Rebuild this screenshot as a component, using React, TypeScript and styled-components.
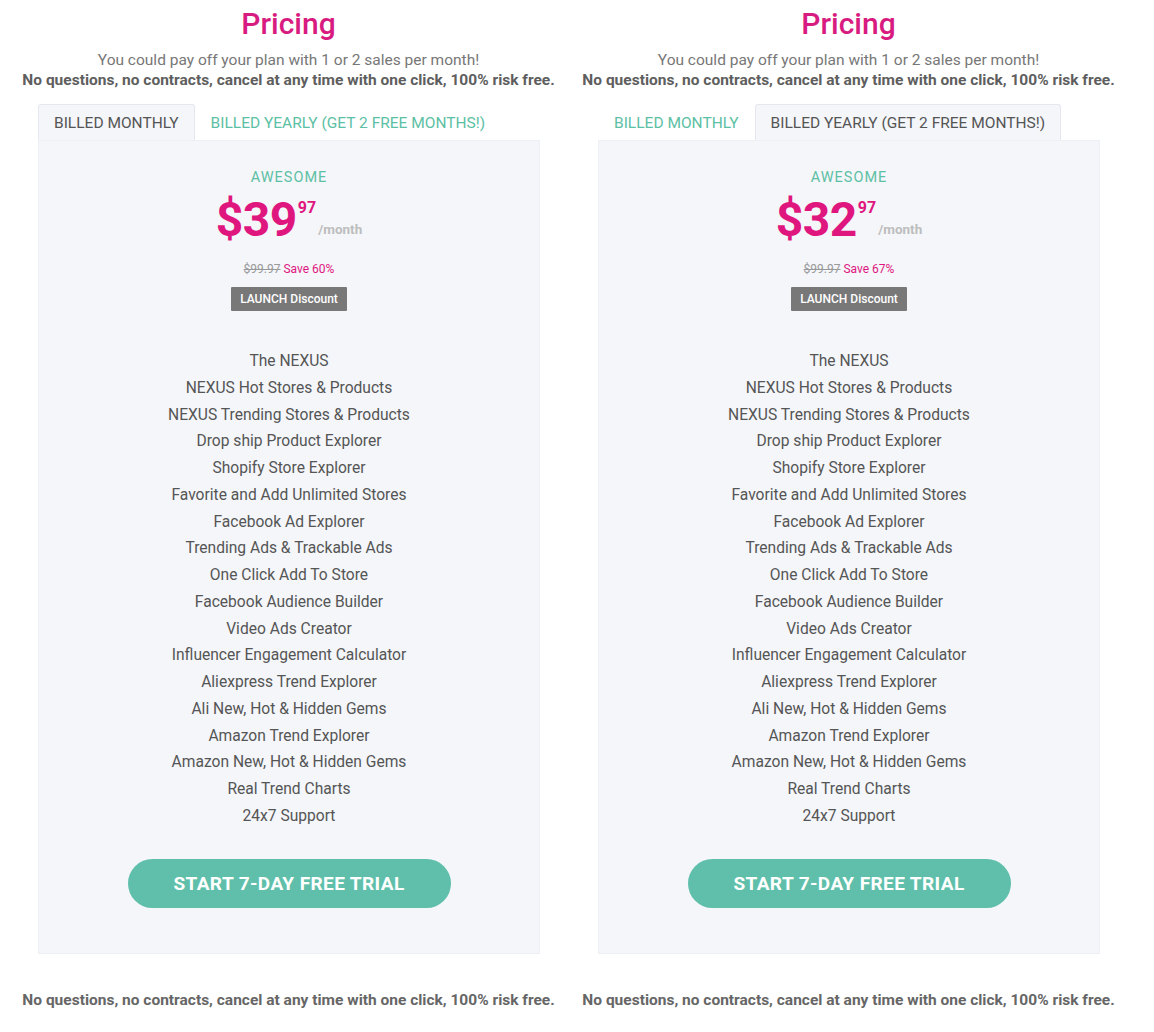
import React, { FC } from 'react';
import styled, { createGlobalStyle } from 'styled-components';

const GlobalStyle = createGlobalStyle`
    html, body {
        margin: 0;
        padding: 0;
        background: #ffffff;
    }
    body {
        font-family: Roboto, "Liberation Sans", Arial, sans-serif;
        -webkit-font-smoothing: antialiased;
    }
`;

const Page = styled.div`
    display: grid;
    grid-template-columns: 537px 537px;
    column-gap: 23px;
    padding: 6px 0 0 20px;
    width: 1154px;
    box-sizing: border-box;
`;

const Section = styled.section`
    display: flex;
    flex-direction: column;
    align-items: stretch;
`;

const Title = styled.h2`
    margin: 0;
    font-size: 30px;
    line-height: 36px;
    font-weight: 500;
    color: #d81b80;
    text-align: center;
`;

const Lead = styled.p`
    margin: 8px 0 0;
    font-size: 15.5px;
    line-height: 20px;
    color: #777;
    text-align: center;
`;

const Strong = styled.p`
    margin: 0;
    font-size: 15.5px;
    line-height: 20px;
    font-weight: 700;
    color: #5e5e5e;
    text-align: center;
    white-space: nowrap;
`;

const Tabs = styled.div`
    display: flex;
    margin: 14px 18px 0;
    height: 36px;
`;

const Tab = styled.button<{ active?: boolean }>`
    border: 1px solid ${p => (p.active ? '#e4e8ee' : 'transparent')};
    border-bottom: none;
    border-radius: 3px 3px 0 0;
    background: ${p => (p.active ? '#f4f6fa' : 'transparent')};
    color: ${p => (p.active ? '#555' : '#5cc0a4')};
    font-family: inherit;
    font-size: 15.5px;
    padding: 0 15px;
    height: 36px;
    text-transform: uppercase;
    cursor: pointer;
    margin-bottom: -1px;
    position: relative;
    z-index: 1;
`;

const Card = styled.div`
    margin: 0 17px 0 18px;
    background: #f4f6fa;
    border: 1px solid #eceff4;
    display: flex;
    flex-direction: column;
    align-items: center;
    padding: 27px 0 45px;
`;

const PlanName = styled.div`
    font-size: 14.5px;
    line-height: 20px;
    letter-spacing: 1px;
    color: #5cc0a4;
    text-transform: uppercase;
`;

const PriceRow = styled.div`
    display: flex;
    align-items: flex-start;
    margin-top: 4px;
    height: 60px;
`;

const Amount = styled.span`
    font-size: 48px;
    line-height: 56px;
    font-weight: 700;
    color: #e0167f;
    letter-spacing: -0.5px;
`;

const Cents = styled.sup`
    font-size: 16px;
    line-height: 16px;
    font-weight: 700;
    color: #e0167f;
    margin: 8px 0 0 1px;
    vertical-align: baseline;
`;

const Per = styled.span`
    font-size: 13.5px;
    font-weight: 700;
    color: #bdbdbd;
    align-self: flex-start;
    margin: 29px 0 0 2px;
`;

const OldPrice = styled.div`
    margin-top: 10px;
    font-size: 12px;
    line-height: 14px;
    color: #999;
`;

const Struck = styled.span`
    text-decoration: line-through;
`;

const Save = styled.span`
    color: #e0167f;
`;

const Badge = styled.span`
    margin-top: 11px;
    background: #787878;
    color: #fff;
    font-size: 12px;
    font-weight: 500;
    line-height: 24px;
    padding: 0 9px;
    border-radius: 1px;
`;

const Features = styled.ul`
    list-style: none;
    margin: 37px 0 0;
    padding: 0;
    text-align: center;
`;

const Feature = styled.li`
    font-size: 15.6px;
    line-height: 26.75px;
    color: #555;
`;

const TrialButton = styled.button`
    margin-top: 29px;
    width: 323px;
    height: 49px;
    border: none;
    border-radius: 25px;
    background: #5fbfaa;
    color: #fff;
    font-family: inherit;
    font-size: 19px;
    font-weight: 700;
    letter-spacing: 0.4px;
    cursor: pointer;
`;

const Footer = styled.p`
    margin: 36px 0 0;
    font-size: 15.5px;
    line-height: 20px;
    font-weight: 700;
    color: #666;
    text-align: center;
    white-space: nowrap;
`;

const FEATURES = [
    'The NEXUS',
    'NEXUS Hot Stores & Products',
    'NEXUS Trending Stores & Products',
    'Drop ship Product Explorer',
    'Shopify Store Explorer',
    'Favorite and Add Unlimited Stores',
    'Facebook Ad Explorer',
    'Trending Ads & Trackable Ads',
    'One Click Add To Store',
    'Facebook Audience Builder',
    'Video Ads Creator',
    'Influencer Engagement Calculator',
    'Aliexpress Trend Explorer',
    'Ali New, Hot & Hidden Gems',
    'Amazon Trend Explorer',
    'Amazon New, Hot & Hidden Gems',
    'Real Trend Charts',
    '24x7 Support',
];

const RISK = 'No questions, no contracts, cancel at any time with one click, 100% risk free.';

const PricingBlock: FC<{ yearly: boolean; price: string; save: string }> = ({ yearly, price, save }) => (
    <Section>
        <Title>Pricing</Title>
        <Lead>You could pay off your plan with 1 or 2 sales per month!</Lead>
        <Strong>{RISK}</Strong>
        <Tabs>
            <Tab active={!yearly}>Billed Monthly</Tab>
            <Tab active={yearly}>Billed Yearly (Get 2 Free Months!)</Tab>
        </Tabs>
        <Card>
            <PlanName>Awesome</PlanName>
            <PriceRow>
                <Amount>${price}</Amount>
                <Cents>97</Cents>
                <Per>/month</Per>
            </PriceRow>
            <OldPrice>
                <Struck>$99.97</Struck> <Save>Save {save}</Save>
            </OldPrice>
            <Badge>LAUNCH Discount</Badge>
            <Features>
                {FEATURES.map(f => (
                    <Feature key={f}>{f}</Feature>
                ))}
            </Features>
            <TrialButton>START 7-DAY FREE TRIAL</TrialButton>
        </Card>
        <Footer>{RISK}</Footer>
    </Section>
);

const App: FC = () => (
    <>
        <GlobalStyle />
        <Page>
            <PricingBlock yearly={false} price="39" save="60%" />
            <PricingBlock yearly price="32" save="67%" />
        </Page>
    </>
);

export default App;
